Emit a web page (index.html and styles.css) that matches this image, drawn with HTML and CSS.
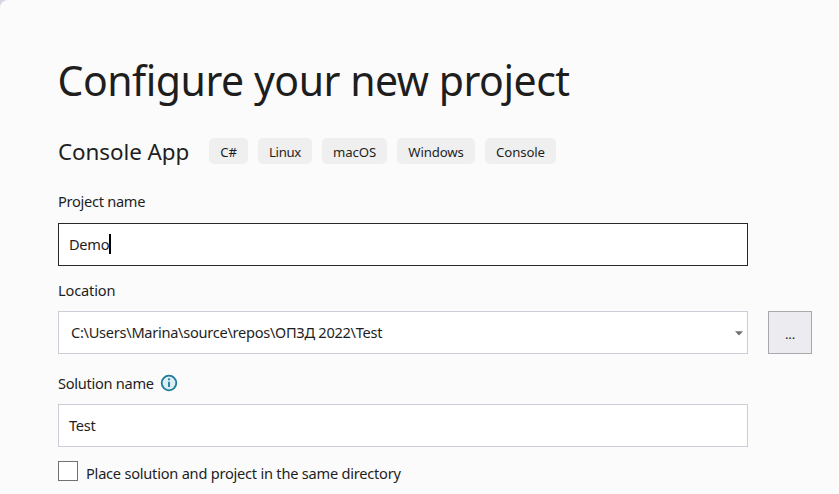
FILE: index.html
```
<!DOCTYPE html>
<html lang="en">
<head>
<meta charset="utf-8">
<title>Configure your new project</title>
<link rel="stylesheet" href="styles.css">
</head>
<body>
<main class="dialog">
  <h1 class="title">Configure your new project</h1>
  <div class="template">
    <h2 class="template-name">Console App</h2>
    <ul class="tags">
      <li class="tag tag-csharp">C#</li>
      <li class="tag tag-linux">Linux</li>
      <li class="tag tag-macos">macOS</li>
      <li class="tag tag-windows">Windows</li>
      <li class="tag tag-console">Console</li>
    </ul>
  </div>
  <div class="label label-project">Project name</div>
  <div class="field focused"><span class="demo">Demo</span><span class="caret"></span></div>
  <div class="label label-location">Location</div>
  <div class="location-row">
    <div class="field combo">
      <span class="path">C:\Users\Marina\source\repos\ОПЗД 2022\Test</span>
      <svg class="arrow" width="8" height="5" viewBox="0 0 8 5"><path d="M0 0.3h8L4 4.5z" fill="#717171"/></svg>
    </div>
    <button class="browse" type="button">...</button>
  </div>
  <div class="label label-solution">
    <span>Solution name</span>
    <svg class="info" width="18" height="18" viewBox="0 0 18 18"><circle cx="9" cy="9" r="7.3" fill="#d9eff7" stroke="#20799a" stroke-width="1.8"/><path d="M9 7.7v5.2" stroke="#20799a" stroke-width="1.8"/><circle cx="9" cy="5.3" r="1.1" fill="#20799a"/></svg>
  </div>
  <div class="field"><span class="test">Test</span></div>
  <div class="check-row"><span class="checkbox"></span><span class="check-label">Place solution and project in the same directory</span></div>
</main>
</body>
</html>
```
FILE: styles.css
```
* { box-sizing: border-box; }

body {
  margin: 0;
  background: #d5d6df;
  color: #1e1e1e;
  font: 14.6px/20px "Noto Sans", "Open Sans", sans-serif;
}

.dialog {
  height: 494px;
  overflow: hidden;
  padding: 50px 27px 0 58px;
  background: #fbfbfb;
  border-top-left-radius: 8px;
}

.title {
  margin: 0;
  font-size: 41px;
  font-weight: 400;
  line-height: 60px;
  letter-spacing: -0.48px;
  text-indent: -0.5px;
  white-space: nowrap;
}

.template {
  display: flex;
  align-items: center;
  height: 26px;
  margin-top: 28px;
}

.template-name {
  width: 151px;
  margin: 0;
  padding-top: 2px;
  font-size: 22.4px;
  font-weight: 400;
  line-height: 26px;
  letter-spacing: -0.06px;
  white-space: nowrap;
}

.tags {
  display: flex;
  gap: 10px;
  margin: 0;
  padding: 0;
  list-style: none;
}

.tag {
  height: 26px;
  padding-top: 1px;
  border-radius: 5px;
  background: #efefef;
  font-size: 13.2px;
  line-height: 26px;
  letter-spacing: -0.12px;
  text-align: center;
  white-space: nowrap;
}

.tag-csharp { width: 39px; }
.tag-linux { width: 54px; letter-spacing: -0.3px; }
.tag-macos { width: 65px; }
.tag-windows { width: 78px; }
.tag-console { width: 71px; }

.label {
  display: flex;
  align-items: center;
  height: 20px;
  letter-spacing: -0.28px;
}

.label-project { margin: 27px 0 12px; }
.label-location { margin: 14px 0 11px; letter-spacing: -0.16px; }
.label-solution { margin: 19px 0 11px; gap: 6px; }

.field {
  display: flex;
  align-items: center;
  width: 690px;
  height: 43px;
  padding: 0 0 2px 10px;
  border: 1px solid #cccdd6;
  background: #fff;
}

.focused { border-color: #28282a; }
.demo { letter-spacing: -0.3px; }
.test { letter-spacing: -0.3px; }

.caret {
  width: 2px;
  height: 20px;
  margin-left: -0.5px;
  background: #000;
}

.location-row { display: flex; gap: 20px; }
.combo { justify-content: space-between; padding: 0 4px 2px 12px; }
.path { letter-spacing: -0.28px; }
.arrow { margin-top: 3px; }

.browse {
  width: 44px;
  height: 43px;
  padding: 3px 0 0;
  border: 1px solid #a9a9ad;
  background: #ececf0;
  color: #1e1e1e;
  font: 13.2px/20px "Noto Sans", sans-serif;
  letter-spacing: -0.2px;
}

.check-row { display: flex; margin-top: 14px; }

.checkbox {
  width: 20px;
  height: 20px;
  margin-right: 8px;
  border: 1px solid #717171;
  background: #fff;
}

.check-label {
  padding-top: 2px;
  letter-spacing: -0.23px;
}
```
